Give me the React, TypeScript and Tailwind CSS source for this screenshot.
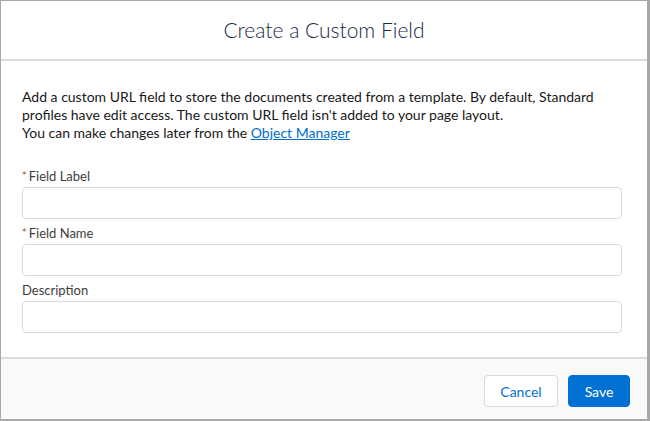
import React from "react";

const FONT = { fontFamily: "Lato, 'Open Sans', Arial, sans-serif" };

function Field({ label, required }: { label: string; required?: boolean }) {
	return (
		<div className="flex flex-col">
			<label className="flex h-[18px] items-center text-[13px] leading-[18px] text-[#3e3e3c]">
				{required && <span className="mr-[2px] text-[11px] text-[#c23934]">*</span>}
				{label}
			</label>
			<input
				type="text"
				className="mt-[2px] h-[32px] w-full rounded-[4px] border border-[#dddbda] bg-white px-3 text-[13px] outline-none"
			/>
		</div>
	);
}

export default function App() {
	return (
		<div
			style={FONT}
			className="flex h-[421px] w-[650px] flex-col border-t border-l border-r-[3px] border-b-2 border-[#a8a8a8] bg-white"
		>
			<div className="flex h-[60px] shrink-0 items-center justify-center border-b-2 border-[#dddbda]">
				<h2 className="text-[21px] font-light text-[#182848]">Create a Custom Field</h2>
			</div>

			<div className="flex-1 pl-[21px] pr-[25px] pt-[27px]">
				<p className="text-[14px] leading-[18px] text-[#181818]">
					Add a custom URL field to store the documents created from a template. By default, Standard
					<br />
					profiles have edit access. The custom URL field isn't added to your page layout.
					<br />
					You can make changes later from the{" "}
					<a href="#" className="text-[#006dcc] underline">
						Object Manager
					</a>
				</p>

				<div className="mt-[25px] flex flex-col gap-[5px]">
					<Field label="Field Label" required />
					<Field label="Field Name" required />
					<Field label="Description" />
				</div>
			</div>

			<div className="flex h-[62px] shrink-0 items-center justify-end gap-[10px] border-t-2 border-[#dddbda] bg-[#f9f9f9] pr-[17px] pt-[4px]">
				<button className="h-[32px] w-[74px] rounded-[4px] border border-[#dddbda] bg-white text-[14px] text-[#0070d2]">
					Cancel
				</button>
				<button className="h-[32px] w-[62px] rounded-[4px] border border-[#0070d2] bg-[#0070d2] text-[14px] text-white">
					Save
				</button>
			</div>
		</div>
	);
}
